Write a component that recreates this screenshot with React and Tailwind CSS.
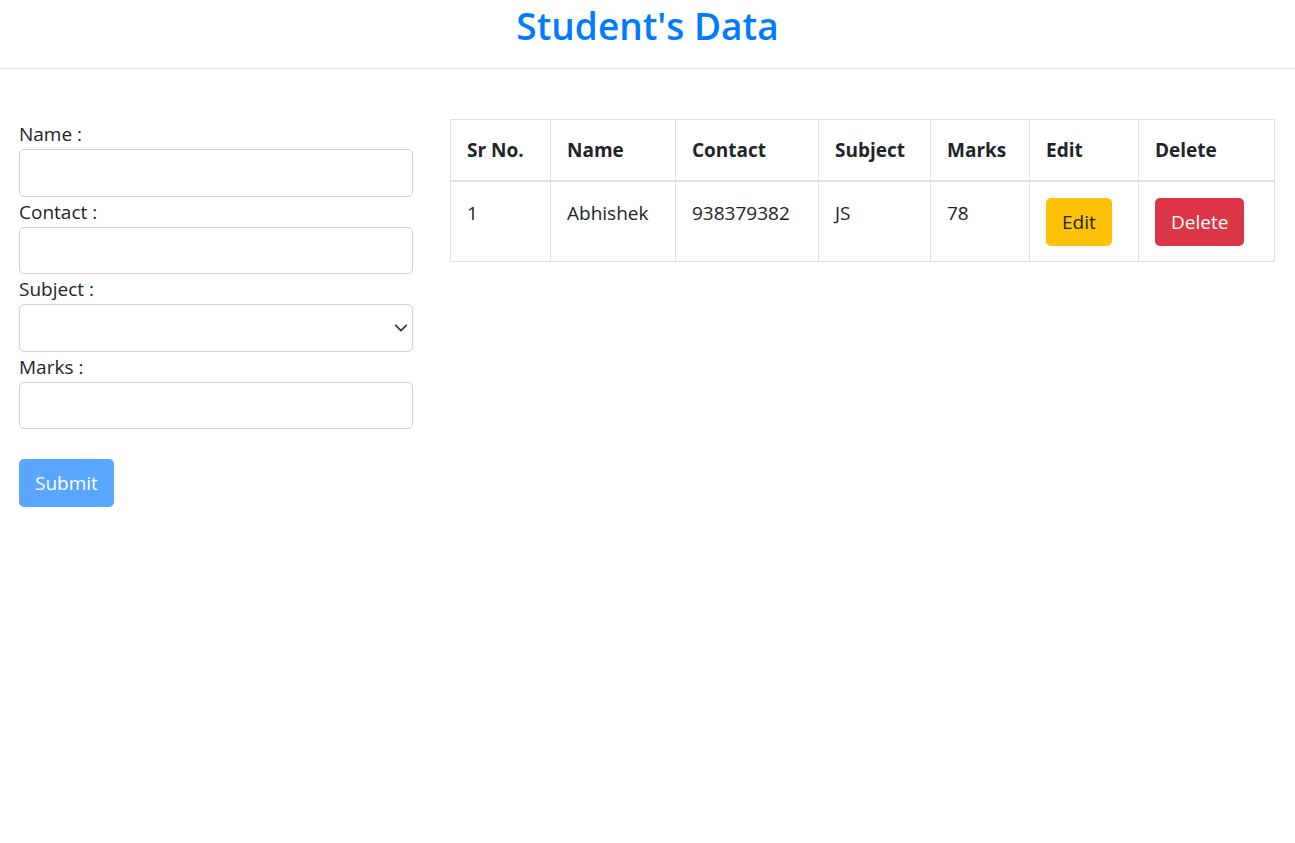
import { useState } from 'react'

const students = [
  { id: 1, name: 'Abhishek', contact: '938379382', subject: 'JS', marks: 78 },
]

function Field({ label, children }) {
  return (
    <div>
      <label className="block leading-[30px]">{label}</label>
      {children}
    </div>
  )
}

export default function App() {
  const [form, setForm] = useState({ name: '', contact: '', subject: '', marks: '' })

  const update = (key) => (e) => setForm({ ...form, [key]: e.target.value })

  return (
    <div className="min-h-screen bg-white text-[19px] text-[#212529]" style={{ fontFamily: '"Open Sans", "Noto Sans", sans-serif' }}>
      {/* Header */}
      <header className="h-[69px] border-b border-[#dee2e6] text-center">
        <h2 className="pt-[2px] text-[37px] font-semibold leading-[48px] text-[#007bff]">Student's Data</h2>
      </header>

      <main className="flex items-start gap-[37px] pl-[19px] pr-[20px] pt-[50px]">
        {/* Form */}
        <form className="w-[394px] shrink-0" onSubmit={(e) => e.preventDefault()}>
          <Field label="Name :">
            <input value={form.name} onChange={update('name')} className="block h-[47.5px] w-full rounded-[5px] border border-[#ced4da] px-4 outline-none" />
          </Field>
          <Field label="Contact :">
            <input value={form.contact} onChange={update('contact')} className="block h-[47.5px] w-full rounded-[5px] border border-[#ced4da] px-4 outline-none" />
          </Field>
          <Field label="Subject :">
            <div className="relative">
              <select value={form.subject} onChange={update('subject')} className="block h-[47.5px] w-full appearance-none rounded-[5px] border border-[#ced4da] bg-white px-4 outline-none">
                <option value=""></option>
                <option value="JS">JS</option>
              </select>
              <svg className="pointer-events-none absolute right-[5px] top-[17px]" width="14" height="14" viewBox="0 0 16 16">
                <path d="M2 5l6 6 6-6" fill="none" stroke="#343a40" strokeWidth="2" strokeLinecap="round" strokeLinejoin="round" />
              </svg>
            </div>
          </Field>
          <Field label="Marks :">
            <input value={form.marks} onChange={update('marks')} className="block h-[47.5px] w-full rounded-[5px] border border-[#ced4da] px-4 outline-none" />
          </Field>
          <button type="submit" disabled className="mt-[30px] h-[48px] rounded-[5px] bg-[#59a6ff] px-4 leading-[30px] text-white">
            Submit
          </button>
        </form>

        {/* Table */}
        <table className="flex-1 border-collapse border border-[#dee2e6] text-left">
          <thead>
            <tr className="border-b-2 border-[#dee2e6]">
              <th className="w-[100px] border border-[#dee2e6] px-4 py-[15px] font-bold leading-[30px]">Sr No.</th>
              <th className="w-[125px] border border-[#dee2e6] px-4 py-[15px] font-bold leading-[30px]">Name</th>
              <th className="w-[143px] border border-[#dee2e6] px-4 py-[15px] font-bold leading-[30px]">Contact</th>
              <th className="w-[112px] border border-[#dee2e6] px-4 py-[15px] font-bold leading-[30px]">Subject</th>
              <th className="w-[99px] border border-[#dee2e6] px-4 py-[15px] font-bold leading-[30px]">Marks</th>
              <th className="w-[109px] border border-[#dee2e6] px-4 py-[15px] font-bold leading-[30px]">Edit</th>
              <th className="border border-[#dee2e6] px-4 py-[15px] font-bold leading-[30px]">Delete</th>
            </tr>
          </thead>
          <tbody>
            {students.map((s, i) => (
              <tr key={s.id}>
                <td className="border border-[#dee2e6] px-4 pb-[15px] pt-[16px] align-top leading-[30px]">{i + 1}</td>
                <td className="border border-[#dee2e6] px-4 pb-[15px] pt-[16px] align-top leading-[30px]">{s.name}</td>
                <td className="border border-[#dee2e6] px-4 pb-[15px] pt-[16px] align-top leading-[30px]">{s.contact}</td>
                <td className="border border-[#dee2e6] px-4 pb-[15px] pt-[16px] align-top leading-[30px]">{s.subject}</td>
                <td className="border border-[#dee2e6] px-4 pb-[15px] pt-[16px] align-top leading-[30px]">{s.marks}</td>
                <td className="border border-[#dee2e6] px-4 pb-[15px] pt-[16px] align-top">
                  <button className="h-[48px] rounded-[5px] bg-[#ffc107] px-4 leading-[30px] text-[#212529]">Edit</button>
                </td>
                <td className="border border-[#dee2e6] px-4 pb-[15px] pt-[16px] align-top">
                  <button className="h-[48px] rounded-[5px] bg-[#dc3545] px-4 leading-[30px] text-white">Delete</button>
                </td>
              </tr>
            ))}
          </tbody>
        </table>
      </main>
    </div>
  )
}
